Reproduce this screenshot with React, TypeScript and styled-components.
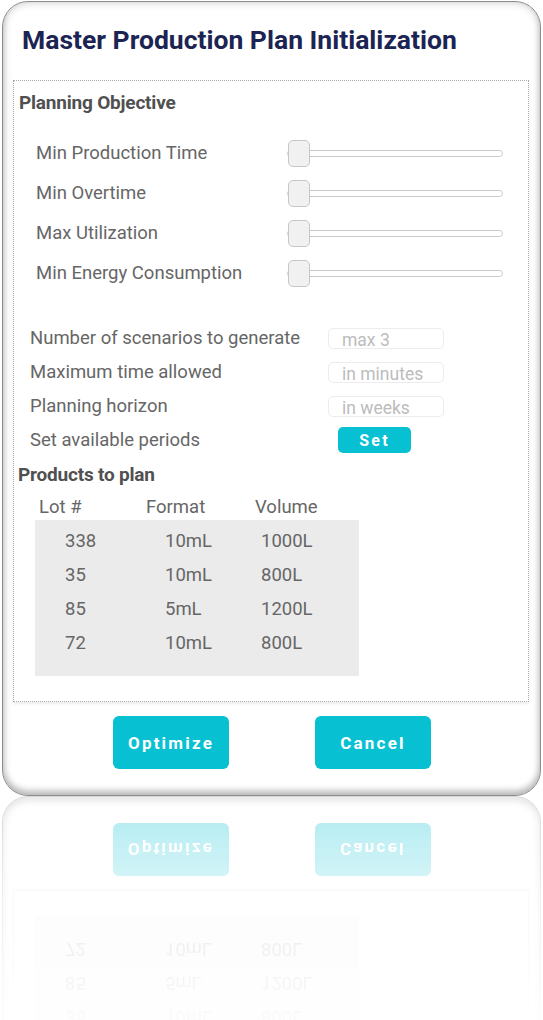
import React from "react";
import styled, { createGlobalStyle } from "styled-components";

const GlobalStyle = createGlobalStyle`
  html, body {
    margin: 0;
    padding: 0;
    background: #ffffff;
  }
  body {
    font-family: Roboto, "Liberation Sans", Arial, sans-serif;
  }
`;

const Card = styled.div`
  box-sizing: border-box;
  width: 539px;
  margin: 1px 0 0 2px;
  padding: 22px 11px 26px 10px;
  background: #ffffff;
  border: 1px solid #8c8c8c;
  border-radius: 26px;
  box-shadow: inset 0 0 9px rgba(0, 0, 0, 0.22),
    inset 0 -5px 6px rgba(0, 0, 0, 0.18);
`;

const Title = styled.h1`
  margin: 0 0 24px 9px;
  font-size: 26.5px;
  line-height: 32px;
  font-weight: 700;
  color: #1b2452;
`;

const Panel = styled.div`
  border: 1px dotted #a8a8a8;
  box-shadow: 0 2px 3px rgba(0, 0, 0, 0.08);
  padding: 11px 0 25px 0;
`;

const SectionHeading = styled.h2`
  margin: 0 0 0 5px;
  font-size: 19px;
  line-height: 22px;
  font-weight: 700;
  color: #505050;
  letter-spacing: -0.2px;
`;

const SliderList = styled.div`
  display: flex;
  flex-direction: column;
  margin: 19px 0 28px 22px;
`;

const SliderRow = styled.div`
  display: grid;
  grid-template-columns: 251px 216px;
  align-items: center;
  height: 40px;
`;

const Label = styled.span`
  font-size: 18.5px;
  color: #666666;
  white-space: nowrap;
`;

const Slider = styled.input.attrs({ type: "range" })`
  -webkit-appearance: none;
  appearance: none;
  width: 216px;
  height: 28px;
  margin: 0;
  background: transparent;

  &::-webkit-slider-runnable-track {
    height: 7px;
    border: 1px solid #c9c9c9;
    border-radius: 5px;
    background: #ffffff;
  }

  &::-webkit-slider-thumb {
    -webkit-appearance: none;
    width: 22px;
    height: 27px;
    margin-top: -11px;
    border: 1px solid #c6c6c6;
    border-radius: 5px;
    background: #f1f1f1;
  }
`;

const FormList = styled.div`
  display: flex;
  flex-direction: column;
  margin: 0 0 0 16px;
`;

const FormRow = styled.div`
  display: grid;
  grid-template-columns: 298px auto;
  align-items: center;
  height: 34px;
`;

const TextInput = styled.input`
  box-sizing: border-box;
  width: 116px;
  height: 21px;
  padding: 4px 0 0 13px;
  border: 1px solid #ececec;
  border-radius: 5px;
  font-family: inherit;
  font-size: 17.5px;
  color: #666666;
  background: #ffffff;
  outline: none;

  &::placeholder {
    color: #bcbcbc;
  }
`;

const ActionButton = styled.button<{ $small?: boolean }>`
  box-sizing: border-box;
  width: ${(p) => (p.$small ? "73px" : "116px")};
  height: ${(p) => (p.$small ? "26px" : "53px")};
  margin-left: ${(p) => (p.$small ? "10px" : "0")};
  border: none;
  border-radius: ${(p) => (p.$small ? "5px" : "6px")};
  background: #07c1d3;
  color: #ffffff;
  font-family: Roboto, sans-serif;
  font-size: ${(p) => (p.$small ? "16px" : "17px")};
  font-weight: 700;
  letter-spacing: 2.2px;
  cursor: pointer;
`;

const ProductsHeading = styled(SectionHeading)`
  margin-top: 7px;
  margin-left: 4px;
`;

const Table = styled.div`
  margin: 8px 0 0 21px;
  width: 324px;
`;

const HeaderRow = styled.div`
  display: grid;
  grid-template-columns: 107px 109px auto;
  padding-left: 4px;
  height: 26px;
  align-items: center;
  font-size: 18.5px;
  color: #666666;
`;

const TableBody = styled.div`
  padding: 4px 0 16px 30px;
  background: #ebebeb;
`;

const DataRow = styled.div`
  display: grid;
  grid-template-columns: 100px 96px auto;
  height: 34px;
  align-items: center;
  font-size: 18.5px;
  color: #666666;
`;

const Footer = styled.div`
  display: flex;
  justify-content: center;
  gap: 86px;
  margin-top: 14px;
  padding-left: 2px;
`;

const Reflection = styled.div`
  height: 224px;
  overflow: hidden;
  -webkit-mask-image: linear-gradient(
    to bottom,
    rgba(0, 0, 0, 0.34) 0%,
    rgba(0, 0, 0, 0.14) 45%,
    rgba(0, 0, 0, 0.03) 100%
  );
  mask-image: linear-gradient(
    to bottom,
    rgba(0, 0, 0, 0.34) 0%,
    rgba(0, 0, 0, 0.14) 45%,
    rgba(0, 0, 0, 0.03) 100%
  );
`;

const Mirror = styled.div`
  height: 100%;
  display: flex;
  flex-direction: column;
  justify-content: flex-end;
  transform: scaleY(-1);
  filter: blur(0.7px);
`;

const objectives = [
  "Min Production Time",
  "Min Overtime",
  "Max Utilization",
  "Min Energy Consumption",
];

const products = [
  { lot: "338", format: "10mL", volume: "1000L" },
  { lot: "35", format: "10mL", volume: "800L" },
  { lot: "85", format: "5mL", volume: "1200L" },
  { lot: "72", format: "10mL", volume: "800L" },
];

const PlanCard: React.FC = () => (
  <Card>
    <Title>Master Production Plan Initialization</Title>
    <Panel>
      <SectionHeading>Planning Objective</SectionHeading>
      <SliderList>
        {objectives.map((name) => (
          <SliderRow key={name}>
            <Label>{name}</Label>
            <Slider defaultValue={0} min={0} max={100} />
          </SliderRow>
        ))}
      </SliderList>

      <FormList>
        <FormRow>
          <Label>Number of scenarios to generate</Label>
          <TextInput placeholder="max 3" />
        </FormRow>
        <FormRow>
          <Label>Maximum time allowed</Label>
          <TextInput placeholder="in minutes" />
        </FormRow>
        <FormRow>
          <Label>Planning horizon</Label>
          <TextInput placeholder="in weeks" />
        </FormRow>
        <FormRow>
          <Label>Set available periods</Label>
          <ActionButton $small>Set</ActionButton>
        </FormRow>
      </FormList>

      <ProductsHeading>Products to plan</ProductsHeading>
      <Table>
        <HeaderRow>
          <span>Lot #</span>
          <span>Format</span>
          <span>Volume</span>
        </HeaderRow>
        <TableBody>
          {products.map((p) => (
            <DataRow key={p.lot}>
              <span>{p.lot}</span>
              <span>{p.format}</span>
              <span>{p.volume}</span>
            </DataRow>
          ))}
        </TableBody>
      </Table>
    </Panel>
    <Footer>
      <ActionButton>Optimize</ActionButton>
      <ActionButton>Cancel</ActionButton>
    </Footer>
  </Card>
);

const App: React.FC = () => {
  return (
    <>
      <GlobalStyle />
      <PlanCard />
      {/* mirrored copy under the card, faded out */}
      <Reflection aria-hidden="true">
        <Mirror>
          <PlanCard />
        </Mirror>
      </Reflection>
    </>
  );
};

export default App;
